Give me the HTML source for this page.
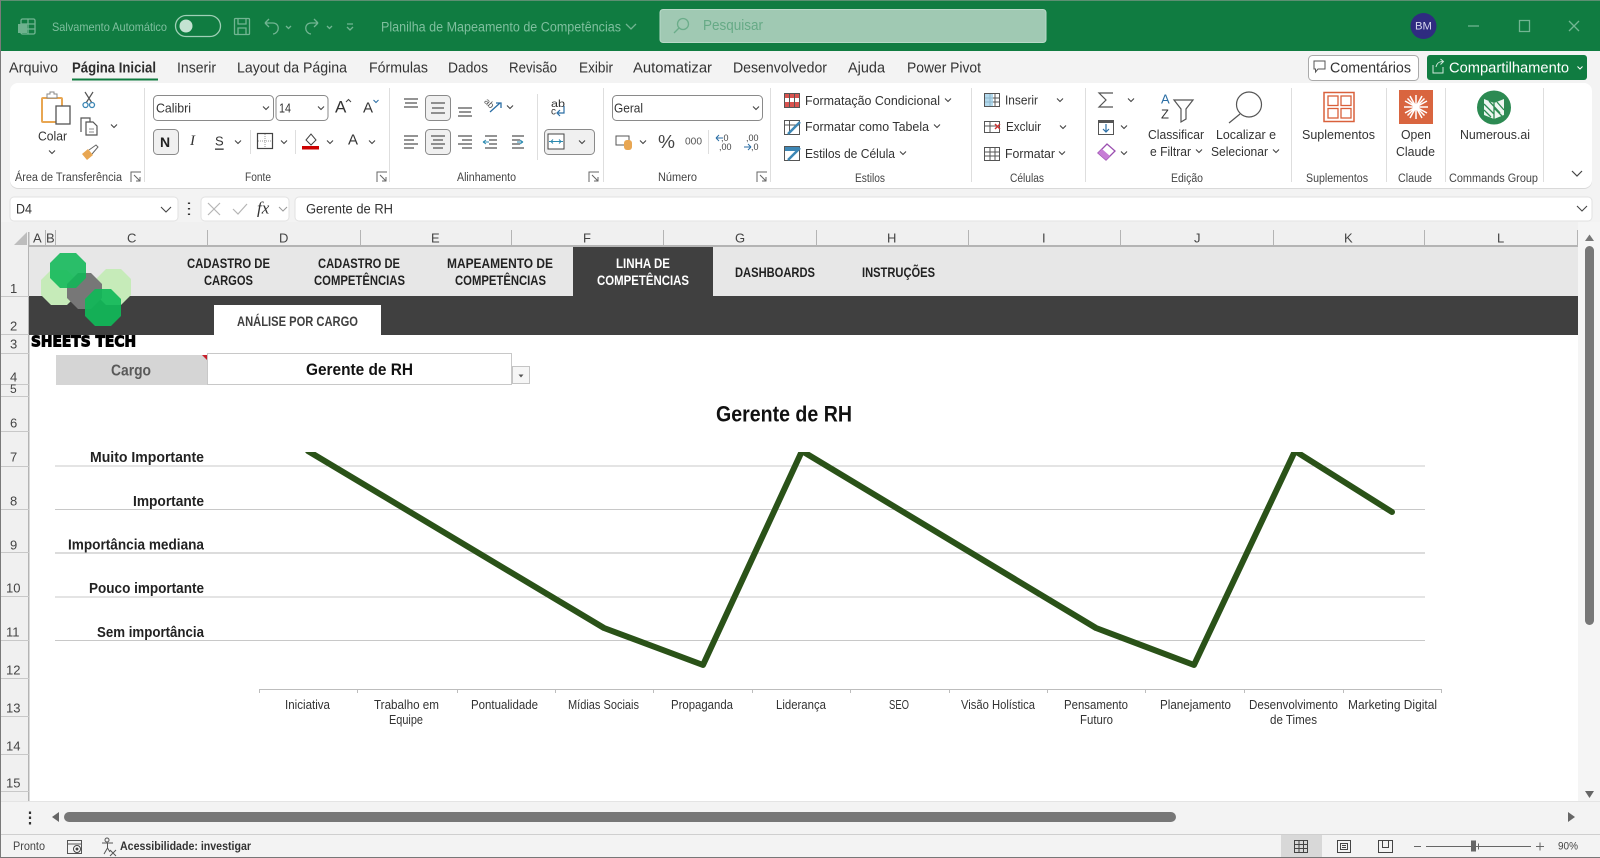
<!DOCTYPE html>
<html lang="pt"><head><meta charset="utf-8"><title>Planilha de Mapeamento de Competências</title>
<style>
html,body{margin:0;padding:0;background:#f3f3f3;width:1600px;height:858px;overflow:hidden}
svg{display:block}
text{font-family:"Liberation Sans",sans-serif;dominant-baseline:central;fill:#333;font-size:12.5px}
.tb{fill:#7fbf9e;font-size:12px}
.tab{font-size:15px;fill:#333}
.lb{font-size:11.5px;fill:#444}
.hd{font-size:13px;fill:#444}
.rh{font-size:13px;fill:#444}
.m{font-weight:700;font-size:14px;fill:#222}
.yl{font-weight:700;font-size:14.5px;fill:#222}
.xl{font-size:12.5px;fill:#333}
.c{fill:none;stroke:#444;stroke-width:1.1}
.i{fill:none;stroke:#555;stroke-width:1.2}
</style></head><body>
<svg width="1600" height="858" viewBox="0 0 1600 858" xmlns="http://www.w3.org/2000/svg">
<defs>
<path id="ch" class="c" d="M-3-1.5 0 1.5 3-1.5"/>
<path id="lau" fill="none" stroke="#666" stroke-width="1" d="M-5 5V-5H5M-2-2 4 4M4 0V4H0"/>
<clipPath id="clipL"><rect x="29" y="452" width="1549" height="240"/></clipPath>
</defs>

<rect width="1600" height="858" fill="#f3f3f3"/>
<!-- title bar -->
<rect width="1600" height="51" fill="#107c41"/>
<rect width="1600" height="1" fill="#5d8f72"/>
<g fill="none" stroke="#72b592" stroke-width="1.3">
<rect x="21" y="19" width="14" height="15" rx="1.5"/><path d="M21 24H35M21 29H35M28 19V34"/>
<rect x="18" y="24" width="9" height="9" fill="#6eb28e" stroke="none"/>
<rect x="175.500" y="15.500" width="45" height="21" rx="10.500" stroke="#9fd0b6"/>
<rect x="234.500" y="18.500" width="15" height="16" rx="1"/><path d="M238 18.500V24H246V18.500M238 34.500V28H246V34.500"/>
<path d="M265 23 269 19M265 23 269 27M265 23H273C280 23 280 33 273 34"/>
<path d="M318 23 314 19M318 23 314 27M318 23H311C304 23 304 33 311 34"/>
<path d="M286 26 288.500 28.500 291 26M327 26 329.500 28.500 332 26M347 24H353M347 27 350 30 353 27M626 24 631 29 636 24"/>
<path d="M1468 26H1479M1519.500 20.500H1529.500V31.500H1519.500ZM1569 21 1579 31M1579 21 1569 31"/>
</g>
<circle cx="186" cy="26" r="6.500" fill="#c4e3d2"/>
<text class="tb" x="52" y="27" textLength="115" lengthAdjust="spacingAndGlyphs">Salvamento Automático</text>
<text class="tb" x="381" y="27" textLength="240" lengthAdjust="spacingAndGlyphs" style="font-size:13.5px">Planilha de Mapeamento de Competências</text>
<rect x="660" y="9.500" width="386" height="33" rx="3" fill="#a0c9b3" stroke="#b9d9c8"/>
<circle cx="683" cy="24" r="5.500" fill="none" stroke="#6bad8a" stroke-width="1.300"/><path d="M679 28 674 33" stroke="#6bad8a" stroke-width="1.300"/>
<text x="703" y="26" textLength="60" lengthAdjust="spacingAndGlyphs" style="fill:#66aa86;font-size:14.5px">Pesquisar</text>
<circle cx="1423.500" cy="26" r="13" fill="#2f2c80"/>
<text x="1415" y="26.500" textLength="17" lengthAdjust="spacingAndGlyphs" style="fill:#d6d6ee;font-size:11px">BM</text>

<!-- tabs -->
<text class="tab" x="9" y="68" textLength="49" lengthAdjust="spacingAndGlyphs">Arquivo</text>
<text class="tab" x="72" y="68" textLength="84" lengthAdjust="spacingAndGlyphs" style="font-weight:700;fill:#2c2c2c">Página Inicial</text>
<rect x="72" y="78.500" width="86" height="2" fill="#107c41"/>
<text class="tab" x="177" y="68" textLength="39" lengthAdjust="spacingAndGlyphs">Inserir</text>
<text class="tab" x="237" y="68" textLength="110" lengthAdjust="spacingAndGlyphs">Layout da Página</text>
<text class="tab" x="369" y="68" textLength="59" lengthAdjust="spacingAndGlyphs">Fórmulas</text>
<text class="tab" x="448" y="68" textLength="40" lengthAdjust="spacingAndGlyphs">Dados</text>
<text class="tab" x="509" y="68" textLength="48" lengthAdjust="spacingAndGlyphs">Revisão</text>
<text class="tab" x="579" y="68" textLength="34" lengthAdjust="spacingAndGlyphs">Exibir</text>
<text class="tab" x="633" y="68" textLength="79" lengthAdjust="spacingAndGlyphs">Automatizar</text>
<text class="tab" x="733" y="68" textLength="94" lengthAdjust="spacingAndGlyphs">Desenvolvedor</text>
<text class="tab" x="848" y="68" textLength="37" lengthAdjust="spacingAndGlyphs">Ajuda</text>
<text class="tab" x="907" y="68" textLength="74" lengthAdjust="spacingAndGlyphs">Power Pivot</text>

<rect x="1308.500" y="55.500" width="110" height="25" rx="4" fill="#fff" stroke="#aaa"/>
<path d="M1314 61H1325V69H1318L1315.500 72V69H1314Z" fill="none" stroke="#555"/>
<text class="tab" x="1330" y="68" textLength="81" lengthAdjust="spacingAndGlyphs">Comentários</text>
<rect x="1427" y="55" width="160" height="25" rx="3" fill="#107c41"/>
<path d="M1433 65V73H1443V67M1436 67C1437 63 1439 61.500 1443 61.500M1440.500 59 1443.500 61.500 1440.500 64.500" fill="none" stroke="#cfe6da"/>
<text class="tab" x="1449" y="68" textLength="120" lengthAdjust="spacingAndGlyphs" style="fill:#fff">Compartilhamento</text>
<path d="M1577.500 66.500 1580 69 1582.500 66.500" fill="none" stroke="#fff"/>

<!-- ribbon -->
<rect x="10" y="84" width="1582" height="105" rx="8" fill="#d9d9d9"/>
<rect x="10" y="83" width="1582" height="105" rx="8" fill="#fff"/>
<g stroke="#dedede"><path d="M144.500 88V182M389.500 88V182M603.500 88V182M770.500 88V182M971.500 88V182M1085.500 88V182M1291.500 88V182M1386.500 88V182M1445.500 88V182M1543.500 88V182M250.500 130V154M295.500 130V154M537.500 94V160M708.500 130V154"/></g>

<!-- clipboard -->
<rect x="42" y="98" width="20" height="24" rx="1" fill="none" stroke="#e8a652" stroke-width="2"/>
<path d="M47 98V94H50V92H54V94H57V98Z" fill="#fff" stroke="#888"/>
<rect x="56" y="106" width="14" height="18" fill="#fff" stroke="#555" stroke-width="1.300"/>
<text x="38" y="136" textLength="29" lengthAdjust="spacingAndGlyphs" style="font-size:13px">Colar</text>
<use href="#ch" x="52" y="152"/>
<path d="M85 92 92 103M93 92 86 103" fill="none" stroke="#555" stroke-width="1.200"/><circle cx="85.500" cy="105" r="2.500" fill="none" stroke="#3d87b5" stroke-width="1.300"/><circle cx="92" cy="105" r="2.500" fill="none" stroke="#3d87b5" stroke-width="1.300"/>
<path class="i" d="M81 132V118H90V122M86 122H93L97 126V135H86Z"/><path d="M89 129H94M89 132H94" stroke="#888"/>
<use href="#ch" x="114" y="126"/>
<path d="M89 150 96 145 98 147 92 154" fill="#fff" stroke="#666"/><path d="M82 154 88 149 93 155 87 160Z" fill="#e8a652"/>

<!-- fonte -->
<rect x="153.500" y="95.500" width="120" height="25" rx="4" fill="#fff" stroke="#8a8a8a"/>
<text x="156" y="108" textLength="35" lengthAdjust="spacingAndGlyphs" style="font-size:13px">Calibri</text><use href="#ch" x="266" y="108"/>
<rect x="276" y="95.500" width="52" height="25" rx="4" fill="#fff" stroke="#8a8a8a"/>
<text x="279" y="108" textLength="12" lengthAdjust="spacingAndGlyphs" style="font-size:13px">14</text><use href="#ch" x="321" y="108"/>
<text x="335" y="107" style="font-size:17px">A</text><path d="M346 102 348.500 99.500 351 102" fill="none" stroke="#444"/>
<text x="363" y="108" style="font-size:15px">A</text><path d="M373.500 100 376 102.500 378.500 100" fill="none" stroke="#2b6ea5"/>
<rect x="153.500" y="129.500" width="25" height="25" rx="4" fill="#f0f0f0" stroke="#8a8a8a"/>
<text x="160" y="142" style="font-size:14px;font-weight:700;fill:#222">N</text>
<text x="190" y="141" style="font-size:15px;font-family:'Liberation Serif',serif;font-style:italic">I</text>
<text x="215" y="141" style="font-size:13px;text-decoration:underline">S</text>
<use href="#ch" x="238" y="142"/>
<rect x="257.500" y="133.500" width="15" height="15" fill="none" stroke="#444" stroke-width="1.200"/><path d="M265 134V148M258 141H272" stroke="#999" stroke-dasharray="1 1"/><use href="#ch" x="284" y="142"/>
<path d="M306 140 311 134 316 140 311 145Z" fill="none" stroke="#444"/><rect x="302" y="146" width="17" height="3.500" fill="#c00"/><use href="#ch" x="330" y="142"/>
<text x="348" y="140" style="font-size:15px">A</text><use href="#ch" x="372" y="142"/>

<!-- alinhamento -->
<rect x="425.500" y="95.500" width="25" height="25" rx="4" fill="#f0f0f0" stroke="#8a8a8a"/>
<rect x="425.500" y="129.500" width="25" height="25" rx="4" fill="#f0f0f0" stroke="#8a8a8a"/>
<rect x="544.500" y="129.500" width="50" height="25" rx="4" fill="#f0f0f0" stroke="#8a8a8a"/>
<g stroke="#555" stroke-width="1.200" fill="none">
<path d="M404 99H418M405 103H417M404 107H418"/>
<path d="M431 103H445M432 108H444M431 113H445"/>
<path d="M458 108H472M459 112H471M458 116H472"/>
<path d="M404 136H418M404 140H414M404 144H418M404 148H414"/>
<path d="M431 136H445M433 140H443M431 144H445M433 148H443"/>
<path d="M458 136H472M462 140H472M458 144H472M462 148H472"/>
<path d="M485 136H497M489 140H497M489 144H497M485 148H497"/>
<path d="M512 136H524M512 140H520M512 144H520M512 148H524"/>
</g>
<text transform="translate(490 104) rotate(45)" x="-6" y="0" style="font-size:9px;fill:#555">ab</text>
<path d="M490 112 500 103M496 103H501V108" fill="none" stroke="#2b6ea5" stroke-width="1.300"/>
<path d="M483 142H489M483 142 486 140M483 142 486 144" fill="none" stroke="#2b8ab0"/><path d="M517 142H523M523 142 520 140M523 142 520 144" fill="none" stroke="#2b8ab0"/>
<use href="#ch" x="510" y="107"/>
<text x="551" y="104" textLength="14" lengthAdjust="spacingAndGlyphs" style="font-size:10.500px">ab</text><text x="551" y="112" style="font-size:10px">c</text><path d="M564 106V113H558M560 110 557 113 560 116" fill="none" stroke="#2b6ea5" stroke-width="1.200"/>
<rect x="548" y="134" width="16" height="15" fill="#fff" stroke="#444"/><path d="M549 141.500H563M551 141.500 553 139.500M551 141.500 553 143.500M561 141.500 559 139.500M561 141.500 559 143.500" fill="none" stroke="#2b8ab0"/>
<use href="#ch" x="582" y="142"/>

<!-- numero -->
<rect x="612.500" y="95.500" width="150" height="25" rx="4" fill="#fff" stroke="#8a8a8a"/>
<text x="614" y="108" textLength="29" lengthAdjust="spacingAndGlyphs" style="font-size:13px">Geral</text><use href="#ch" x="756" y="108"/>
<rect x="616" y="136" width="13" height="9" fill="#fff" stroke="#555"/><rect x="624" y="140" width="8" height="10" rx="3" fill="#e8a652"/>
<use href="#ch" x="643" y="142"/>
<text x="658" y="142" textLength="17" lengthAdjust="spacingAndGlyphs" style="font-size:18px;fill:#444">%</text>
<text x="685" y="142" textLength="17" lengthAdjust="spacingAndGlyphs" style="font-size:10px;fill:#555">000</text>
<text x="721" y="138" style="font-size:9px;fill:#444">,0</text><text x="719" y="147" style="font-size:9px;fill:#444">,00</text><path d="M716 138H723M716 138 719 135M716 138 719 141" fill="none" stroke="#2b6ea5"/>
<text x="746" y="138" style="font-size:9px;fill:#444">,00</text><text x="751" y="147" style="font-size:9px;fill:#444">,0</text><path d="M744 147H751M751 147 748 144M751 147 748 150" fill="none" stroke="#2b6ea5"/>

<!-- estilos -->
<g stroke="#555" fill="none">
<rect x="784.500" y="93.500" width="15" height="14"/><rect x="785" y="94" width="14" height="4" fill="#d9534f" stroke="none"/><rect x="785" y="102" width="14" height="5" fill="#d9534f" stroke="none"/><path d="M789.500 94V107M794.500 94V107"/>
<rect x="784.500" y="120.500" width="15" height="14"/><path d="M785 125H799M789.500 121V134"/><path d="M788 134 800 122" stroke="#3d87b5" stroke-width="2.500"/>
<rect x="784.500" y="146.500" width="15" height="14"/><rect x="785" y="147" width="14" height="4" fill="#3d87b5" stroke="none"/><path d="M788 160 800 148" stroke="#3d87b5" stroke-width="2.500"/>
</g>
<text x="805" y="101" textLength="135" lengthAdjust="spacingAndGlyphs">Formatação Condicional</text><use href="#ch" x="948" y="100"/>
<text x="805" y="127" textLength="124" lengthAdjust="spacingAndGlyphs">Formatar como Tabela</text><use href="#ch" x="937" y="126"/>
<text x="805" y="154" textLength="90" lengthAdjust="spacingAndGlyphs">Estilos de Célula</text><use href="#ch" x="903" y="153"/>

<!-- celulas -->
<g stroke="#555" fill="none">
<rect x="984.500" y="93.500" width="15" height="13"/><path d="M985 98H999M985 102H999M990 94V106M995 94V106"/><rect x="985" y="94" width="8" height="12" fill="#9fd0e8" stroke="none" opacity=".8"/>
<rect x="984.500" y="121.500" width="15" height="11"/><path d="M985 126H999M990 122V132"/>
<rect x="984.500" y="147.500" width="15" height="13"/><path d="M985 152H999M985 156H999M990 148V160M995 148V160"/>
</g>
<path d="M995 124 1000 129M1000 124 995 129" stroke="#c33" stroke-width="1.400"/>
<text x="1005" y="100.500" textLength="33" lengthAdjust="spacingAndGlyphs">Inserir</text><use href="#ch" x="1060" y="100"/>
<text x="1006" y="127" textLength="35" lengthAdjust="spacingAndGlyphs">Excluir</text><use href="#ch" x="1063" y="127"/>
<text x="1005" y="154" textLength="50" lengthAdjust="spacingAndGlyphs">Formatar</text><use href="#ch" x="1062" y="153"/>

<!-- edicao -->
<path d="M1113 93H1099L1106 100 1099 107H1113" fill="none" stroke="#555" stroke-width="1.200"/><use href="#ch" x="1131" y="100"/>
<rect x="1098.500" y="120.500" width="15" height="14" fill="none" stroke="#555"/><rect x="1099" y="120" width="14" height="3" fill="#555"/><path d="M1106 124V132M1103 129 1106 132 1109 129" fill="none" stroke="#2b6ea5" stroke-width="1.200"/><use href="#ch" x="1124" y="127"/>
<path d="M1098 153 1107 144 1115 151 1106 160Z" fill="#fff" stroke="#9b4fb0" stroke-width="1.300"/><path d="M1098 153 1102 149 1110 156 1106 160Z" fill="#c77dd6"/><use href="#ch" x="1124" y="153"/>
<text x="1161" y="99" style="font-size:13px;fill:#2b6ea5">A</text><text x="1161" y="114" style="font-size:13px">Z</text>
<path d="M1174 100H1193L1186 109V119L1181 122V109Z" fill="none" stroke="#555" stroke-width="1.200"/>
<text x="1148" y="135" textLength="56" lengthAdjust="spacingAndGlyphs">Classificar</text>
<text x="1150" y="152" textLength="41" lengthAdjust="spacingAndGlyphs">e Filtrar</text><use href="#ch" x="1199" y="151"/>
<circle cx="1249" cy="104.500" r="12.500" fill="none" stroke="#555" stroke-width="1.200"/><path d="M1240 114 1229 123" stroke="#555" stroke-width="1.200"/>
<text x="1216" y="135" textLength="60" lengthAdjust="spacingAndGlyphs">Localizar e</text>
<text x="1211" y="152" textLength="57" lengthAdjust="spacingAndGlyphs">Selecionar</text><use href="#ch" x="1276" y="151"/>

<!-- suplementos -->
<rect x="1324" y="92.500" width="30" height="29" fill="none" stroke="#d9603b" stroke-width="1.500"/>
<rect x="1328" y="96" width="10" height="9.500" fill="none" stroke="#d9603b" stroke-width="1.300"/><rect x="1341" y="96" width="10" height="9.500" fill="none" stroke="#d9603b" stroke-width="1.300"/><rect x="1328" y="108.500" width="10" height="9.500" fill="none" stroke="#d9603b" stroke-width="1.300"/><rect x="1341" y="108.500" width="10" height="9.500" fill="none" stroke="#d9603b" stroke-width="1.300"/>
<text x="1302" y="135" textLength="73" lengthAdjust="spacingAndGlyphs">Suplementos</text>
<!-- claude -->
<rect x="1399" y="90" width="34" height="34" fill="#d9653f"/>
<path d="M1416 95V119M1404 107H1428M1407.500 98.500 1424.500 115.500M1424.500 98.500 1407.500 115.500M1410 96 1422 118M1422 96 1410 118M1405 101 1427 113M1427 101 1405 113" stroke="#fff" stroke-width="1.500"/>
<text x="1401" y="135" textLength="30" lengthAdjust="spacingAndGlyphs">Open</text>
<text x="1396" y="152" textLength="39" lengthAdjust="spacingAndGlyphs">Claude</text>
<!-- numerous -->
<circle cx="1494" cy="107.500" r="17" fill="#2c8a52"/>
<path d="M1484 99 1494 103 1504 99V115L1494 119 1484 115Z" fill="#eef6f1"/>
<path d="M1494 103V119M1484 104 1494 114M1484 110 1491 117M1489 101 1500 113M1497 102 1504 110M1494 108 1504 118" fill="none" stroke="#2c8a52" stroke-width="1.300"/>
<text x="1460" y="135" textLength="70" lengthAdjust="spacingAndGlyphs">Numerous.ai</text>
<path d="M1572 171 1577 176 1582 171" fill="none" stroke="#444" stroke-width="1.200"/>

<!-- group labels -->
<text class="lb" x="15" y="178" textLength="107" lengthAdjust="spacingAndGlyphs">Área de Transferência</text><use href="#lau" x="136" y="177"/>
<text class="lb" x="245" y="178" textLength="26" lengthAdjust="spacingAndGlyphs">Fonte</text><use href="#lau" x="382" y="177"/>
<text class="lb" x="457" y="178" textLength="59" lengthAdjust="spacingAndGlyphs">Alinhamento</text><use href="#lau" x="594" y="177"/>
<text class="lb" x="658" y="178" textLength="39" lengthAdjust="spacingAndGlyphs">Número</text><use href="#lau" x="762" y="177"/>
<text class="lb" x="855" y="179" textLength="30" lengthAdjust="spacingAndGlyphs">Estilos</text>
<text class="lb" x="1010" y="179" textLength="34" lengthAdjust="spacingAndGlyphs">Células</text>
<text class="lb" x="1171" y="179" textLength="32" lengthAdjust="spacingAndGlyphs">Edição</text>
<text class="lb" x="1306" y="179" textLength="62" lengthAdjust="spacingAndGlyphs">Suplementos</text>
<text class="lb" x="1398" y="179" textLength="34" lengthAdjust="spacingAndGlyphs">Claude</text>
<text class="lb" x="1449" y="179" textLength="89" lengthAdjust="spacingAndGlyphs">Commands Group</text>

<!-- formula bar -->
<rect x="10" y="197" width="168" height="24" rx="4" fill="#fff" stroke="#e2e2e2"/>
<text x="16" y="209" textLength="16" lengthAdjust="spacingAndGlyphs" style="font-size:13.5px">D4</text><path d="M161 207 166 212 171 207" fill="none" stroke="#444" stroke-width="1.100"/>
<path d="M189 202.500V204M189 208V209.500M189 213.500V215" stroke="#333" stroke-width="2.200"/>
<rect x="201" y="197" width="88" height="24" rx="4" fill="#fff" stroke="#e2e2e2"/>
<path d="M208 203 220 215M220 203 208 215M233 209 238 214 247 204" fill="none" stroke="#b5b5b5" stroke-width="1.200"/>
<text x="257" y="208" style="font-family:'Liberation Serif',serif;font-style:italic;font-size:17px;fill:#333">fx</text>
<path d="M279 207 283 211 287 207" fill="none" stroke="#999"/>
<rect x="295" y="197" width="1297" height="24" rx="4" fill="#fff" stroke="#e2e2e2"/>
<text x="306" y="209" textLength="87" lengthAdjust="spacingAndGlyphs" style="font-size:13.5px">Gerente de RH</text>
<path d="M1577 206 1582 211 1587 206" fill="none" stroke="#444" stroke-width="1.100"/>

<!-- grid surface -->
<rect x="29" y="247" width="1549" height="554" fill="#fff"/>
<rect x="0" y="222" width="29" height="579" fill="#f0f0f0"/>
<rect x="29" y="222" width="1549" height="25" fill="#f0f0f0"/>
<rect x="28" y="245" width="1550" height="2" fill="#b4b4b4"/>
<rect x="28" y="232" width="1.500" height="569" fill="#b4b4b4"/>
<path d="M14 245H27V232Z" fill="#bdbdbd"/>
<g stroke="#b4b4b4"><path d="M45.500 230V246M55.500 230V246M207.500 230V246M360.500 230V246M511.500 230V246M663.500 230V246M816.500 230V246M968.500 230V246M1120.500 230V246M1273.500 230V246M1424.500 230V246M1577.500 230V246"/></g>
<text class="hd" x="33" y="238">A</text><text class="hd" x="46" y="238">B</text><text class="hd" x="127" y="238">C</text><text class="hd" x="279" y="238">D</text><text class="hd" x="431" y="238">E</text><text class="hd" x="583" y="238">F</text><text class="hd" x="735" y="238">G</text><text class="hd" x="887" y="238">H</text><text class="hd" x="1042" y="238">I</text><text class="hd" x="1194" y="238">J</text><text class="hd" x="1344" y="238">K</text><text class="hd" x="1497" y="238">L</text>
<g stroke="#c8c8c8"><path d="M0 296.500H29M0 334.500H29M0 353.500H29M0 384.500H29M0 396.500H29M0 431.500H29M0 466.500H29M0 509.500H29M0 552.500H29M0 596.500H29M0 640.500H29M0 678.500H29M0 716.500H29M0 754.500H29M0 791.500H29"/></g>
<text class="rh" x="10" y="288.500">1</text><text class="rh" x="10" y="326">2</text><text class="rh" x="10" y="344">3</text><text class="rh" x="10" y="377">4</text><text class="rh" x="10" y="389" style="font-size:12px">5</text><text class="rh" x="10" y="423">6</text><text class="rh" x="10" y="457">7</text><text class="rh" x="10" y="501">8</text><text class="rh" x="10" y="545">9</text><text class="rh" x="6" y="588">10</text><text class="rh" x="6" y="632">11</text><text class="rh" x="6" y="670">12</text><text class="rh" x="6" y="708">13</text><text class="rh" x="6" y="746">14</text><text class="rh" x="6" y="783">15</text>

<!-- sheet bands -->
<rect x="29" y="247" width="1549" height="49" fill="#e7e7e7"/>
<rect x="29" y="296" width="1549" height="39" fill="#404040"/>
<rect x="573" y="247" width="140" height="49" fill="#404040"/>
<rect x="214" y="305" width="167" height="30" fill="#fff"/>
<text class="m" x="187" y="263" textLength="83" lengthAdjust="spacingAndGlyphs">CADASTRO DE</text>
<text class="m" x="204" y="280" textLength="49" lengthAdjust="spacingAndGlyphs">CARGOS</text>
<text class="m" x="318" y="263" textLength="82" lengthAdjust="spacingAndGlyphs">CADASTRO DE</text>
<text class="m" x="314" y="280" textLength="91" lengthAdjust="spacingAndGlyphs">COMPETÊNCIAS</text>
<text class="m" x="447" y="263" textLength="106" lengthAdjust="spacingAndGlyphs">MAPEAMENTO DE</text>
<text class="m" x="455" y="280" textLength="91" lengthAdjust="spacingAndGlyphs">COMPETÊNCIAS</text>
<text class="m" x="616" y="263" textLength="54" lengthAdjust="spacingAndGlyphs" style="fill:#fff">LINHA DE</text>
<text class="m" x="597" y="280" textLength="92" lengthAdjust="spacingAndGlyphs" style="fill:#fff">COMPETÊNCIAS</text>
<text class="m" x="735" y="272" textLength="80" lengthAdjust="spacingAndGlyphs">DASHBOARDS</text>
<text class="m" x="862" y="272" textLength="73" lengthAdjust="spacingAndGlyphs">INSTRUÇÕES</text>
<text class="m" x="237" y="321" textLength="121" lengthAdjust="spacingAndGlyphs" style="fill:#404040">ANÁLISE POR CARGO</text>

<!-- logo -->
<polygon points="51,270 67,270 77,280 77,295 67,305 51,305 41,295 41,280" fill="#c6ebb9"/>
<polygon points="106,269 121,269 131,279 131,295 121,305 106,305 96,295 96,279" fill="#c6ebb9"/>
<polygon points="78,273 91,273 102,284 102,298 91,309 78,309 67,298 67,284" fill="#777"/>
<polygon points="60,253 76,253 86,263 86,278 76,288 60,288 50,278 50,263" fill="#10b858" fill-opacity=".88"/>
<polygon points="95,289 111,289 121,299 121,316 111,326 95,326 85,316 85,299" fill="#10b858" fill-opacity=".92"/>
<text x="31" y="341.500" textLength="105" lengthAdjust="spacingAndGlyphs" style="font-weight:700;font-size:15px;fill:#000;stroke:#000;stroke-width:1;font-family:'DejaVu Sans',sans-serif">SHEETS TECH</text>

<!-- cargo -->
<rect x="56" y="355" width="151" height="30" fill="#d5d5d5"/>
<path d="M202 355H207V360Z" fill="#c8202c"/>
<text x="111" y="371" textLength="40" lengthAdjust="spacingAndGlyphs" style="font-weight:700;font-size:16px;fill:#595959">Cargo</text>
<rect x="207.500" y="353.500" width="304" height="31" fill="#fff" stroke="#c8c8c8"/>
<text x="306" y="370" textLength="107" lengthAdjust="spacingAndGlyphs" style="font-weight:700;font-size:16.500px;fill:#111">Gerente de RH</text>
<rect x="512.500" y="366.500" width="17" height="17" fill="#f6f6f6" stroke="#c4c4c4"/>
<path d="M518.500 374.500H523.500L521 377.500Z" fill="#555"/>

<!-- chart -->
<text x="716" y="414" textLength="136" lengthAdjust="spacingAndGlyphs" style="font-weight:700;font-size:22px;fill:#111">Gerente de RH</text>
<g stroke="#c8c8c8"><path d="M55 466H1425M55 509.500H1425M55 597H1425M55 640.500H1425"/></g>
<path d="M55 553H1425" stroke="#dcdcdc" stroke-width="2"/>
<text class="yl" x="90" y="458" textLength="114" lengthAdjust="spacingAndGlyphs">Muito Importante</text>
<text class="yl" x="133" y="502" textLength="71" lengthAdjust="spacingAndGlyphs">Importante</text>
<text class="yl" x="68" y="545.500" textLength="136" lengthAdjust="spacingAndGlyphs">Importância mediana</text>
<text class="yl" x="89" y="589" textLength="115" lengthAdjust="spacingAndGlyphs">Pouco importante</text>
<text class="yl" x="97" y="633" textLength="107" lengthAdjust="spacingAndGlyphs">Sem importância</text>
<path clip-path="url(#clipL)" d="M308 451 604 628 703 665 802 451 1096 628 1194 665 1295 451 1392 512" fill="none" stroke="#2a5218" stroke-width="6" stroke-linejoin="round" stroke-linecap="round"/>
<path d="M259 689.500H1441M259.500 689V693M357.500 689V693M457.500 689V693M555.500 689V693M653.500 689V693M752.500 689V693M850.500 689V693M949.500 689V693M1047.500 689V693M1145.500 689V693M1244.500 689V693M1343.500 689V693M1441.500 689V693" fill="none" stroke="#bdbdbd"/>
<text class="xl" x="285" y="705" textLength="45" lengthAdjust="spacingAndGlyphs">Iniciativa</text>
<text class="xl" x="374" y="705" textLength="65" lengthAdjust="spacingAndGlyphs">Trabalho em</text>
<text class="xl" x="389" y="720" textLength="34" lengthAdjust="spacingAndGlyphs">Equipe</text>
<text class="xl" x="471" y="705" textLength="67" lengthAdjust="spacingAndGlyphs">Pontualidade</text>
<text class="xl" x="568" y="705" textLength="71" lengthAdjust="spacingAndGlyphs">Mídias Sociais</text>
<text class="xl" x="671" y="705" textLength="62" lengthAdjust="spacingAndGlyphs">Propaganda</text>
<text class="xl" x="776" y="705" textLength="50" lengthAdjust="spacingAndGlyphs">Liderança</text>
<text class="xl" x="889" y="705" textLength="20" lengthAdjust="spacingAndGlyphs">SEO</text>
<text class="xl" x="961" y="705" textLength="74" lengthAdjust="spacingAndGlyphs">Visão Holística</text>
<text class="xl" x="1064" y="705" textLength="64" lengthAdjust="spacingAndGlyphs">Pensamento</text>
<text class="xl" x="1080" y="720" textLength="33" lengthAdjust="spacingAndGlyphs">Futuro</text>
<text class="xl" x="1160" y="705" textLength="71" lengthAdjust="spacingAndGlyphs">Planejamento</text>
<text class="xl" x="1249" y="705" textLength="89" lengthAdjust="spacingAndGlyphs">Desenvolvimento</text>
<text class="xl" x="1270" y="720" textLength="47" lengthAdjust="spacingAndGlyphs">de Times</text>
<text class="xl" x="1348" y="705" textLength="89" lengthAdjust="spacingAndGlyphs">Marketing Digital</text>

<!-- right scrollbar -->
<rect x="1578" y="222" width="22" height="579" fill="#f5f5f5"/>
<path d="M1585 241 1589.500 234.500 1594 241Z" fill="#777"/>
<rect x="1585" y="246" width="9" height="379" rx="4.500" fill="#777"/>
<path d="M1585 791 1594 791 1589.500 798Z" fill="#666"/>

<!-- bottom -->
<rect x="0" y="801" width="1600" height="1" fill="#e4e4e4"/>
<rect x="0" y="802" width="1600" height="32" fill="#f3f3f3"/>
<path d="M30 811.500V814M30 816.500V819M30 822V824.500" stroke="#333" stroke-width="2.200"/>
<path d="M52 817 59 812V822Z" fill="#666"/>
<rect x="64" y="812" width="1112" height="10" rx="5" fill="#777"/>
<path d="M1568 812 1575 817 1568 822Z" fill="#666"/>
<rect x="0" y="834" width="1600" height="1" fill="#cfcfcf"/>
<rect x="0" y="835" width="1600" height="22" fill="#f3f3f3"/>
<rect x="1281" y="835" width="41" height="22" fill="#d8d8d8"/>
<rect x="0" y="857" width="1600" height="1" fill="#777"/>
<rect x="0" y="0" width="1" height="858" fill="#7a7a7a"/>
<text x="13" y="847" textLength="32" lengthAdjust="spacingAndGlyphs" style="font-size:11.500px;fill:#444">Pronto</text>
<rect x="67.500" y="840.500" width="14" height="13" fill="none" stroke="#555"/><path d="M68 844H81" stroke="#555"/><circle cx="77" cy="849" r="3.500" fill="#fff" stroke="#444"/><circle cx="77" cy="849" r="1.500" fill="#444"/>
<circle cx="107" cy="840" r="2" fill="none" stroke="#555"/><path d="M102 843H113M107.500 843V848L104 854M107.500 848 110 852M110 850 116 856M116 850 110 856" fill="none" stroke="#555"/>
<text x="120" y="847" textLength="131" lengthAdjust="spacingAndGlyphs" style="font-size:11.500px;font-weight:700;fill:#333">Acessibilidade: investigar</text>
<g fill="none" stroke="#444">
<rect x="1294.500" y="840.500" width="13" height="12"/><path d="M1294.500 844.500H1307.500M1294.500 848.500H1307.500M1299 840.500V852.500M1303.500 840.500V852.500"/>
<rect x="1337.500" y="840.500" width="13" height="12"/><rect x="1340.500" y="843.500" width="7" height="6"/><path d="M1342 845.500H1346M1342 847.500H1346"/>
<rect x="1378.500" y="840.500" width="14" height="12"/><path d="M1382.500 840.500V847.500H1388.500V840.500"/>
<path d="M1414 846.500H1421M1426 846.500H1531M1536 846.500H1544M1540 842.500V850.500M1478.500 843.500V849.500" stroke="#666"/>
</g>
<rect x="1471" y="840.500" width="5" height="11" fill="#666"/>
<text x="1558" y="846.500" textLength="20" lengthAdjust="spacingAndGlyphs" style="font-size:11px;fill:#444">90%</text>
</svg>
</body></html>
